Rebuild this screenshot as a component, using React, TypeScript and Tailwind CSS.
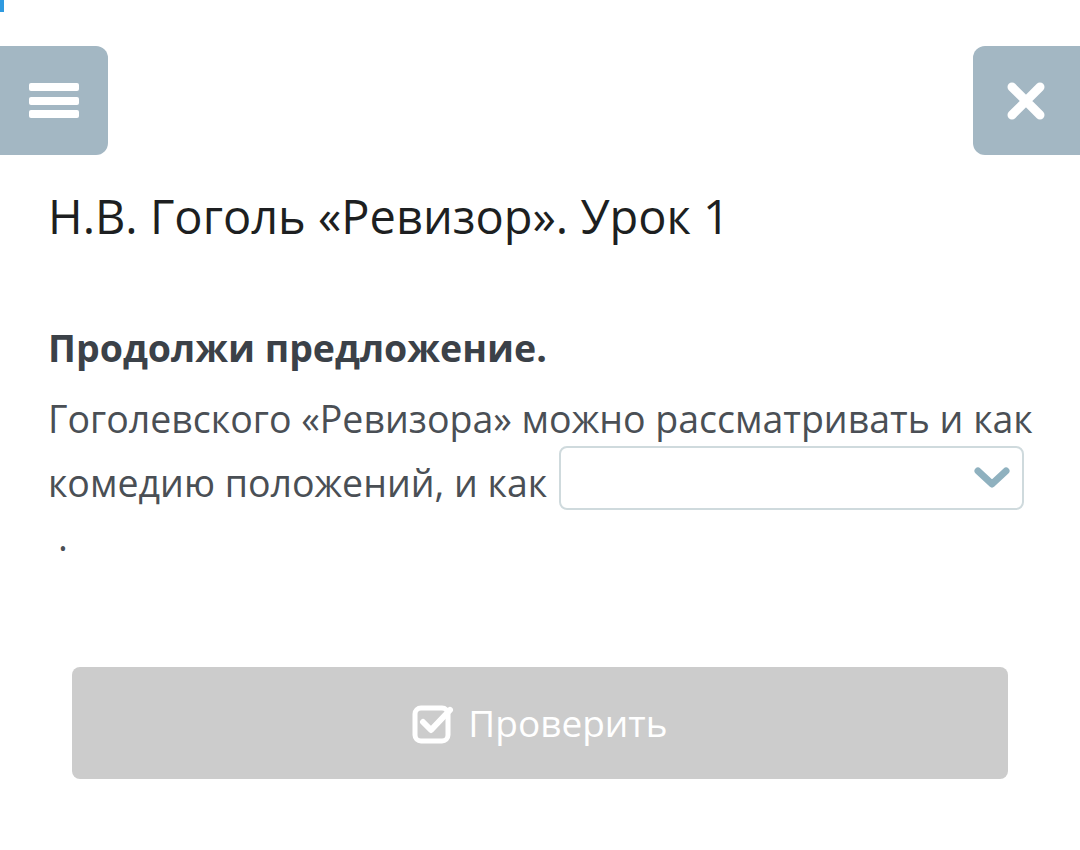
import React from "react";

export default function App() {
  return (
    <div className="relative w-[1080px] h-[850px] bg-white overflow-hidden" style={{ fontFamily: '"Open Sans", sans-serif' }}>
      <div className="absolute left-0 top-0 w-[4px] h-[12px] bg-[#2f9ae0]" />
      <div className="flex justify-between items-start pt-[46px]">
        <button className="w-[109px] h-[109px] -ml-px bg-[#a3b7c3] rounded-r-[12px] flex items-center justify-center">
          <svg width="50" height="40" viewBox="0 0 50 40">
            <rect x="0" y="2" width="50" height="8" rx="2" fill="#fff" />
            <rect x="0" y="16" width="50" height="8" rx="2" fill="#fff" />
            <rect x="0" y="29" width="50" height="8" rx="2" fill="#fff" />
          </svg>
        </button>
        <button className="w-[108px] h-[109px] ml-auto mr-[-1px] bg-[#a3b7c3] rounded-l-[12px] flex items-center justify-center pr-[2px]">
          <svg width="40" height="40" viewBox="0 0 40 40">
            <path d="M6 6 L34 34 M34 6 L6 34" stroke="#fff" strokeWidth="9" strokeLinecap="round" />
          </svg>
        </button>
      </div>

      <div className="pl-[48px] pr-[30px]">
        <h1 className="mt-[31px] text-[47px] leading-[60px] text-[#1d1f21]">Н.В. Гоголь «Ревизор». Урок 1</h1>

        <p className="mt-[78px] text-[37.5px] leading-[48px] font-bold text-[#3b4148]">Продолжи предложение.</p>

        <div className="mt-[15px] text-[37.5px] leading-[64px] text-[#4a4f55] whitespace-nowrap">
          <div>Гоголевского «Ревизора» можно рассматривать и как</div>
          <div>
            <span>комедию положений, и как </span>
            <span className="relative -top-[6px] inline-flex align-middle w-[465px] h-[64px] border-2 border-[#cfdadd] rounded-[8px] items-center justify-end pr-[12px] -mt-[6px] ml-[2px]">
              <svg width="36" height="24" viewBox="0 0 36 24">
                <path d="M4 5 L18 18 L32 5" stroke="#8fb1bf" strokeWidth="7" fill="none" strokeLinecap="round" strokeLinejoin="round" />
              </svg>
            </span>
          </div>
          <div className="pl-[10px] leading-[40px] mt-[1px]">.</div>
        </div>
      </div>

      <div className="px-[72px] mt-[110px]">
        <button className="w-[936px] h-[112px] bg-[#cccccc] rounded-[8px] flex items-center justify-center gap-[14px] text-white text-[37px]">
          <svg width="42" height="42" viewBox="0 0 42 42">
            <rect x="3" y="6" width="33" height="33" rx="6" stroke="#fff" strokeWidth="5" fill="none" />
            <path d="M11 20 L19 28 L38 8" stroke="#fff" strokeWidth="6" fill="none" strokeLinecap="round" strokeLinejoin="round" />
          </svg>
          <span>Проверить</span>
        </button>
      </div>
    </div>
  );
}
